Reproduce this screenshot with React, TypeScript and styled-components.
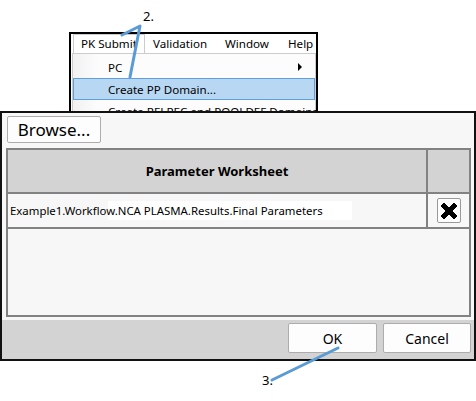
import React from "react";
import styled, { createGlobalStyle } from "styled-components";

const GlobalStyle = createGlobalStyle`
  html, body {
    margin: 0;
    padding: 0;
    background: #ffffff;
  }
  body {
    font-family: "Noto Sans", "Open Sans", sans-serif;
    color: #000;
  }
`;

const Canvas = styled.div`
  position: relative;
  width: 476px;
  height: 401px;
  overflow: hidden;
  background: #fff;
`;

/* ---------- menu ---------- */

const MenuArea = styled.div`
  padding: 32px 0 0 69px;
`;

const MenuFrame = styled.div`
  box-sizing: border-box;
  width: 249px;
  height: 79px;
  border: 2px solid #000;
  border-bottom: none;
  background: #fff;
  overflow: hidden;
  display: flex;
  flex-direction: column;
`;

const MenuBar = styled.div`
  display: flex;
  height: 19px;
  padding-left: 2px;
  flex-shrink: 0;
`;

const MenuTitle = styled.div<{ $open?: boolean; $width: number }>`
  box-sizing: border-box;
  width: ${(p) => p.$width}px;
  flex-shrink: 0;
  padding-left: 7px;
  font-size: 11.6px;
  line-height: 18px;
  white-space: nowrap;
  border: 1px solid ${(p) => (p.$open ? "#cccccc" : "transparent")};
  border-bottom: none;
`;

const Dropdown = styled.div`
  box-sizing: border-box;
  margin-left: 1px;
  width: 244px;
  flex: 1;
  border: 1px solid #cccccc;
  border-bottom: none;
  background: #fcfcfc;
  padding: 2px 0 0 0;
  position: relative;
  &::before {
    content: "";
    position: absolute;
    left: 0;
    top: 0;
    bottom: 0;
    width: 24px;
    background: linear-gradient(to right, #f1f1f1, #fcfcfc);
  }
`;

const DropItem = styled.div<{ $active?: boolean }>`
  position: relative;
  box-sizing: border-box;
  height: 22px;
  display: flex;
  align-items: center;
  padding-left: 34px;
  padding-right: 12px;
  font-size: 11.6px;
  white-space: nowrap;
  background: ${(p) => (p.$active ? "#b7d7f3" : "transparent")};
  border: 1px solid ${(p) => (p.$active ? "#5fa0dc" : "transparent")};
`;

const SubArrow = styled.span`
  margin-left: auto;
  width: 0;
  height: 0;
  border-top: 4px solid transparent;
  border-bottom: 4px solid transparent;
  border-left: 4px solid #000;
`;

/* ---------- dialog ---------- */

const Dialog = styled.div`
  box-sizing: border-box;
  width: 476px;
  height: 250px;
  border: 2px solid #111;
  background: #f7f7f7;
  display: flex;
  flex-direction: column;
`;

const Toolbar = styled.div`
  padding: 3px 0 0 5px;
  height: 35px;
  box-sizing: border-box;
  flex-shrink: 0;
`;

const WinButton = styled.button<{ $w: number; $h: number; $size: number }>`
  box-sizing: border-box;
  width: ${(p) => p.$w}px;
  height: ${(p) => p.$h}px;
  background: #fdfdfd;
  border: 1px solid #adadad;
  border-radius: 2px;
  font-family: "Noto Sans", "Open Sans", sans-serif;
  font-size: ${(p) => p.$size}px;
  color: #000;
  padding: 0;
  cursor: default;
`;

const Grid = styled.div`
  box-sizing: border-box;
  margin: 0 3px 0 4px;
  flex: 1;
  border: 2px solid #828282;
  background: #f7f7f7;
  display: grid;
  grid-template-columns: 1fr 41px;
  grid-template-rows: 44px 35px 1fr;
`;

const HeadCell = styled.div<{ $last?: boolean }>`
  background: #d3d3d3;
  border-bottom: 2px solid #828282;
  border-right: ${(p) => (p.$last ? "none" : "2px solid #828282")};
  display: flex;
  align-items: center;
  justify-content: center;
  font-size: 13px;
  font-weight: 700;
`;

const Cell = styled.div<{ $last?: boolean }>`
  position: relative;
  border-bottom: 2px solid #828282;
  border-right: ${(p) => (p.$last ? "none" : "2px solid #828282")};
  display: flex;
  align-items: center;
  justify-content: ${(p) => (p.$last ? "center" : "flex-start")};
  padding-left: ${(p) => (p.$last ? 0 : 2)}px;
  font-size: 11.4px;
  white-space: nowrap;
`;

const CellText = styled.span`
  position: relative;
  z-index: 1;
`;

const EditBox = styled.span`
  position: absolute;
  left: 100px;
  top: 7px;
  width: 244px;
  height: 19px;
  background: #ffffff;
`;

const DeleteButton = styled.button`
  box-sizing: border-box;
  width: 24px;
  height: 25px;
  padding: 0;
  background: #fdfdfd;
  border: 1px solid #9a9a9a;
  border-radius: 2px;
  display: flex;
  align-items: center;
  justify-content: center;
  cursor: default;
`;

const Filler = styled.div`
  grid-column: 1 / span 2;
`;

const Footer = styled.div`
  margin-top: 3px;
  height: 39px;
  flex-shrink: 0;
  background: #d3d3d3;
  display: flex;
  justify-content: flex-end;
  align-items: flex-start;
  gap: 6px;
  padding: 3px 3px 0 0;
  box-sizing: border-box;
`;

/* ---------- annotations ---------- */

const Overlay = styled.svg`
  position: absolute;
  left: 0;
  top: 0;
  pointer-events: none;
`;

const Callout = styled.span<{ $x: number; $y: number }>`
  position: absolute;
  left: ${(p) => p.$x}px;
  top: ${(p) => p.$y}px;
  font-size: 13px;
  line-height: 14px;
`;

function CrossIcon() {
  return (
    <svg width="20" height="20" viewBox="0 0 20 20">
      <path
        d="M2 5 L5 2 L10 7 L15 2 L18 5 L13 10 L18 15 L15 18 L10 13 L5 18 L2 15 L7 10 Z"
        fill="#000"
        stroke="#000"
        strokeWidth="1"
        strokeLinejoin="round"
      />
    </svg>
  );
}

export default function App() {
  return (
    <Canvas>
      <GlobalStyle />
      <MenuArea>
        <MenuFrame>
          <MenuBar>
            <MenuTitle $open $width={72}>PK Submit</MenuTitle>
            <MenuTitle $width={72}>Validation</MenuTitle>
            <MenuTitle $width={63}>Window</MenuTitle>
            <MenuTitle $width={36}>Help</MenuTitle>
          </MenuBar>
          <Dropdown>
            <DropItem>
              PC
              <SubArrow />
            </DropItem>
            <DropItem $active>Create PP Domain...</DropItem>
            <DropItem>Create RELREC and POOLDEF Domains</DropItem>
          </Dropdown>
        </MenuFrame>
      </MenuArea>

      <Dialog>
        <Toolbar>
          <WinButton $w={94} $h={27} $size={17}>
            Browse...
          </WinButton>
        </Toolbar>
        <Grid>
          <HeadCell>Parameter Worksheet</HeadCell>
          <HeadCell $last />
          <Cell>
            <EditBox />
            <CellText>Example1.Workflow.NCA PLASMA.Results.Final Parameters</CellText>
          </Cell>
          <Cell $last>
            <DeleteButton>
              <CrossIcon />
            </DeleteButton>
          </Cell>
          <Filler />
        </Grid>
        <Footer>
          <WinButton $w={89} $h={30} $size={14}>
            OK
          </WinButton>
          <WinButton $w={88} $h={30} $size={14}>
            Cancel
          </WinButton>
        </Footer>
      </Dialog>

      <Overlay width="476" height="401" viewBox="0 0 476 401">
        <polyline
          points="122,35 140,26 130,77"
          fill="none"
          stroke="#5b9bd5"
          strokeWidth="3"
          strokeLinecap="round"
          strokeLinejoin="round"
        />
        <line
          x1="272"
          y1="380"
          x2="338"
          y2="348"
          stroke="#5b9bd5"
          strokeWidth="3"
          strokeLinecap="round"
        />
      </Overlay>
      <Callout $x={143} $y={9}>2.</Callout>
      <Callout $x={262} $y={373}>3.</Callout>
    </Canvas>
  );
}
